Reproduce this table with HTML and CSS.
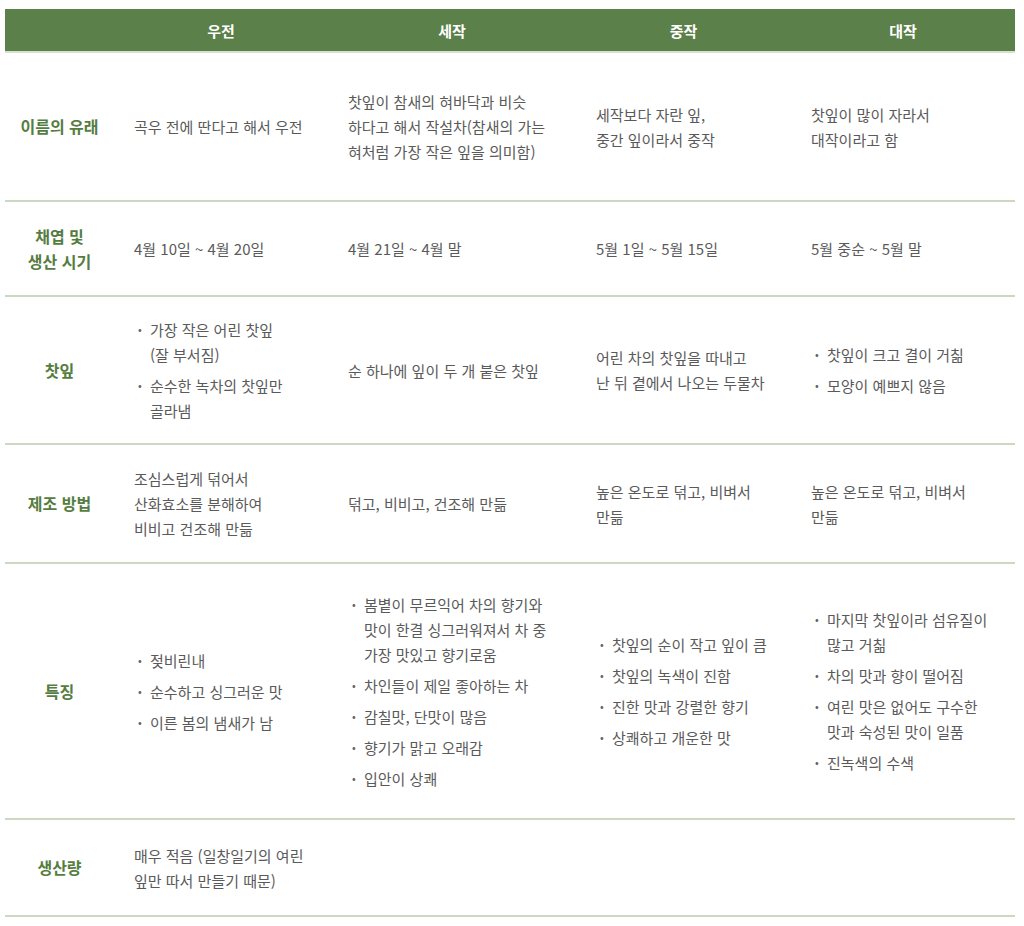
FILE: index.html
```html
<!DOCTYPE html>
<html lang="ko">
<head>
<meta charset="utf-8">
<title>녹차의 종류</title>
<link rel="stylesheet" href="styles.css">
</head>
<body>
<div class="wrap">
<table class="tea">
  <colgroup>
    <col class="c-label">
    <col class="c-a">
    <col class="c-b">
    <col class="c-c">
    <col class="c-d">
  </colgroup>
  <thead>
    <tr class="head">
      <th></th>
      <th>우전</th>
      <th>세작</th>
      <th>중작</th>
      <th>대작</th>
    </tr>
  </thead>
  <tbody>
    <tr class="r1">
      <th class="label">이름의 유래</th>
      <td>곡우 전에 딴다고 해서 우전</td>
      <td>찻잎이 참새의 혀바닥과 비슷<br>하다고 해서 작설차(참새의 가는<br>혀처럼 가장 작은 잎을 의미함)</td>
      <td>세작보다 자란 잎,<br>중간 잎이라서 중작</td>
      <td>찻잎이 많이 자라서<br>대작이라고 함</td>
    </tr>
    <tr class="r2">
      <th class="label">채엽 및<br>생산 시기</th>
      <td>4월 10일 ~ 4월 20일</td>
      <td>4월 21일 ~ 4월 말</td>
      <td>5월 1일 ~ 5월 15일</td>
      <td>5월 중순 ~ 5월 말</td>
    </tr>
    <tr class="r3">
      <th class="label">찻잎</th>
      <td>
        <ul class="dots">
          <li>가장 작은 어린 찻잎<br>(잘 부서짐)</li>
          <li>순수한 녹차의 찻잎만<br>골라냄</li>
        </ul>
      </td>
      <td>순 하나에 잎이 두 개 붙은 찻잎</td>
      <td>어린 차의 찻잎을 따내고<br>난 뒤 곁에서 나오는 두물차</td>
      <td>
        <ul class="dots">
          <li>찻잎이 크고 결이 거칢</li>
          <li>모양이 예쁘지 않음</li>
        </ul>
      </td>
    </tr>
    <tr class="r4">
      <th class="label">제조 방법</th>
      <td>조심스럽게 덖어서<br>산화효소를 분해하여<br>비비고 건조해 만듦</td>
      <td>덖고, 비비고, 건조해 만듦</td>
      <td>높은 온도로 덖고, 비벼서<br>만듦</td>
      <td>높은 온도로 덖고, 비벼서<br>만듦</td>
    </tr>
    <tr class="r5">
      <th class="label">특징</th>
      <td>
        <ul class="dots">
          <li>젖비린내</li>
          <li>순수하고 싱그러운 맛</li>
          <li>이른 봄의 냄새가 남</li>
        </ul>
      </td>
      <td>
        <ul class="dots">
          <li>봄볕이 무르익어 차의 향기와<br>맛이 한결 싱그러워져서 차 중<br>가장 맛있고 향기로움</li>
          <li>차인들이 제일 좋아하는 차</li>
          <li>감칠맛, 단맛이 많음</li>
          <li>향기가 맑고 오래감</li>
          <li>입안이 상쾌</li>
        </ul>
      </td>
      <td>
        <ul class="dots">
          <li>찻잎의 순이 작고 잎이 큼</li>
          <li>찻잎의 녹색이 진함</li>
          <li>진한 맛과 강렬한 향기</li>
          <li>상쾌하고 개운한 맛</li>
        </ul>
      </td>
      <td>
        <ul class="dots">
          <li>마지막 찻잎이라 섬유질이<br>많고 거칢</li>
          <li>차의 맛과 향이 떨어짐</li>
          <li>여린 맛은 없어도 구수한<br>맛과 숙성된 맛이 일품</li>
          <li>진녹색의 수색</li>
        </ul>
      </td>
    </tr>
    <tr class="r6">
      <th class="label">생산량</th>
      <td>매우 적음 (일창일기의 여린<br>잎만 따서 만들기 때문)</td>
      <td></td>
      <td></td>
      <td></td>
    </tr>
  </tbody>
</table>
</div>
</body>
</html>
```

FILE: styles.css
```css
html, body {
  margin: 0;
  padding: 0;
  background: #ffffff;
}

body {
  font-family: "Noto Sans CJK KR", "Noto Sans", sans-serif;
  color: #5a5a5a;
  font-size: 15px;
  line-height: 25px;
}

.wrap {
  padding: 9px 9px 0 5px;
}

.tea {
  width: 1010px;
  border-collapse: collapse;
  table-layout: fixed;
}

.c-label { width: 109px; }
.c-a { width: 214px; }
.c-b { width: 248px; }
.c-c { width: 215px; }
.c-d { width: 224px; }

.head th {
  background: #5b8049;
  color: #ffffff;
  font-weight: 700;
  font-size: 15px;
  height: 42px;
  padding: 0 20px;
  text-align: center;
  border-bottom: 2px solid #d6e1cf;
}

.tea tbody th,
.tea tbody td {
  padding: 0 20px;
  vertical-align: middle;
  text-align: left;
  border-bottom: 2px solid #cbd9c2;
  font-weight: 400;
}

.tea tbody th.label {
  text-align: center;
  color: #557d41;
  font-weight: 700;
  font-size: 16px;
  padding: 0 4px;
}

.r1 td, .r1 th { height: 147px; }
.r2 td, .r2 th { height: 93px; }
.r3 td, .r3 th { height: 146px; }
.r4 td, .r4 th { height: 117px; }
.r5 td, .r5 th { height: 254px; }
.r6 td, .r6 th { height: 95px; }

.dots {
  list-style: none;
  margin: 0;
  padding: 0 0 0 4px;
  display: flex;
  flex-direction: column;
  gap: 6px;
}

.dots li {
  display: flex;
}

.dots li::before {
  content: "•";
  flex: none;
  width: 12px;
  font-size: 11px;
  color: #666666;
}
```
